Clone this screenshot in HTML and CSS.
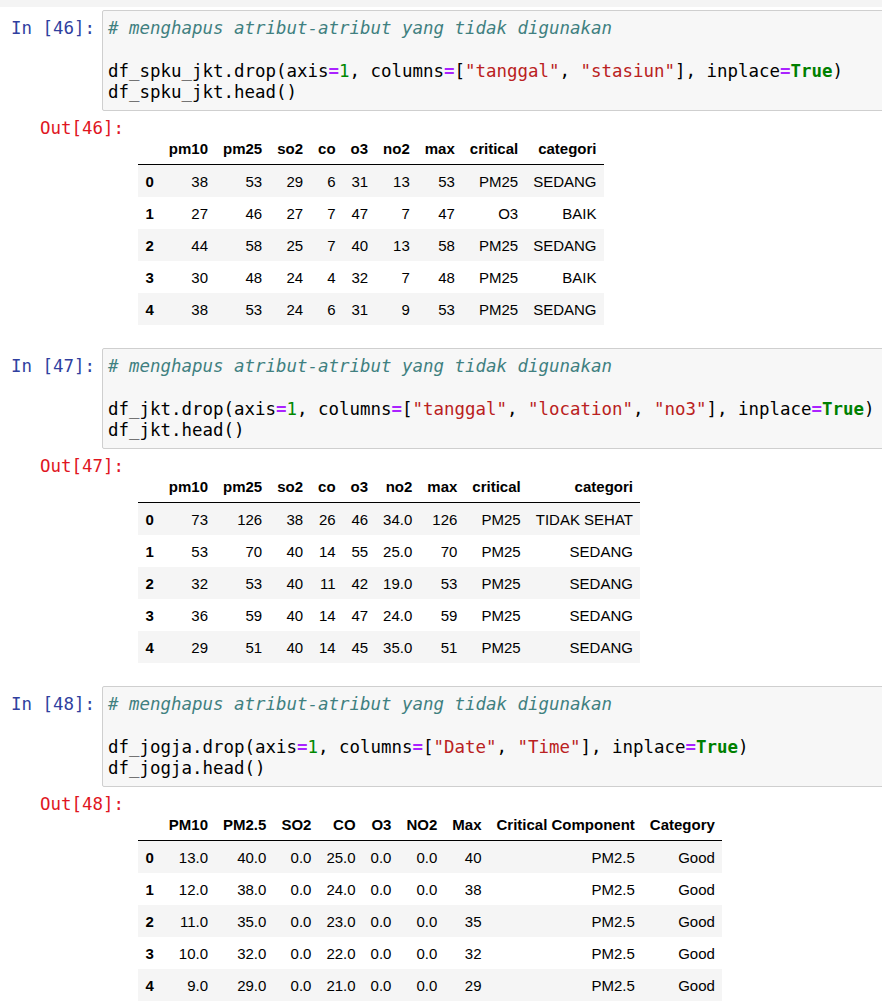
FILE: index.html
```html
<!DOCTYPE html>
<html>
<head>
<meta charset="utf-8">
<link rel="stylesheet" href="styles.css">
</head>
<body>
<div class="topstrip"></div>
<div class="notebook">

<div class="cell">
  <div class="input">
    <div class="prompt in-prompt">In [46]:</div>
    <div class="code"><pre><span class="c"># menghapus atribut-atribut yang tidak digunakan</span>

df_spku_jkt.drop(axis<span class="o">=</span><span class="n">1</span>, columns<span class="o">=</span>[<span class="s">"tanggal"</span>, <span class="s">"stasiun"</span>], inplace<span class="o">=</span><span class="k">True</span>)
df_spku_jkt.head()</pre></div>
  </div>
  <div class="output">
    <div class="prompt out-prompt">Out[46]:</div>
    <div class="out-sub">
      <table class="dataframe">
        <thead><tr><th></th><th>pm10</th><th>pm25</th><th>so2</th><th>co</th><th>o3</th><th>no2</th><th>max</th><th>critical</th><th>categori</th></tr></thead>
        <tbody>
          <tr><th>0</th><td>38</td><td>53</td><td>29</td><td>6</td><td>31</td><td>13</td><td>53</td><td>PM25</td><td>SEDANG</td></tr>
          <tr><th>1</th><td>27</td><td>46</td><td>27</td><td>7</td><td>47</td><td>7</td><td>47</td><td>O3</td><td>BAIK</td></tr>
          <tr><th>2</th><td>44</td><td>58</td><td>25</td><td>7</td><td>40</td><td>13</td><td>58</td><td>PM25</td><td>SEDANG</td></tr>
          <tr><th>3</th><td>30</td><td>48</td><td>24</td><td>4</td><td>32</td><td>7</td><td>48</td><td>PM25</td><td>BAIK</td></tr>
          <tr><th>4</th><td>38</td><td>53</td><td>24</td><td>6</td><td>31</td><td>9</td><td>53</td><td>PM25</td><td>SEDANG</td></tr>
        </tbody>
      </table>
    </div>
  </div>
</div>

<div class="cell">
  <div class="input">
    <div class="prompt in-prompt">In [47]:</div>
    <div class="code"><pre><span class="c"># menghapus atribut-atribut yang tidak digunakan</span>

df_jkt.drop(axis<span class="o">=</span><span class="n">1</span>, columns<span class="o">=</span>[<span class="s">"tanggal"</span>, <span class="s">"location"</span>, <span class="s">"no3"</span>], inplace<span class="o">=</span><span class="k">True</span>)
df_jkt.head()</pre></div>
  </div>
  <div class="output">
    <div class="prompt out-prompt">Out[47]:</div>
    <div class="out-sub">
      <table class="dataframe">
        <thead><tr><th></th><th>pm10</th><th>pm25</th><th>so2</th><th>co</th><th>o3</th><th>no2</th><th>max</th><th>critical</th><th>categori</th></tr></thead>
        <tbody>
          <tr><th>0</th><td>73</td><td>126</td><td>38</td><td>26</td><td>46</td><td>34.0</td><td>126</td><td>PM25</td><td>TIDAK SEHAT</td></tr>
          <tr><th>1</th><td>53</td><td>70</td><td>40</td><td>14</td><td>55</td><td>25.0</td><td>70</td><td>PM25</td><td>SEDANG</td></tr>
          <tr><th>2</th><td>32</td><td>53</td><td>40</td><td>11</td><td>42</td><td>19.0</td><td>53</td><td>PM25</td><td>SEDANG</td></tr>
          <tr><th>3</th><td>36</td><td>59</td><td>40</td><td>14</td><td>47</td><td>24.0</td><td>59</td><td>PM25</td><td>SEDANG</td></tr>
          <tr><th>4</th><td>29</td><td>51</td><td>40</td><td>14</td><td>45</td><td>35.0</td><td>51</td><td>PM25</td><td>SEDANG</td></tr>
        </tbody>
      </table>
    </div>
  </div>
</div>

<div class="cell">
  <div class="input">
    <div class="prompt in-prompt">In [48]:</div>
    <div class="code"><pre><span class="c"># menghapus atribut-atribut yang tidak digunakan</span>

df_jogja.drop(axis<span class="o">=</span><span class="n">1</span>, columns<span class="o">=</span>[<span class="s">"Date"</span>, <span class="s">"Time"</span>], inplace<span class="o">=</span><span class="k">True</span>)
df_jogja.head()</pre></div>
  </div>
  <div class="output">
    <div class="prompt out-prompt">Out[48]:</div>
    <div class="out-sub">
      <table class="dataframe">
        <thead><tr><th></th><th>PM10</th><th>PM2.5</th><th>SO2</th><th>CO</th><th>O3</th><th>NO2</th><th>Max</th><th>Critical Component</th><th>Category</th></tr></thead>
        <tbody>
          <tr><th>0</th><td>13.0</td><td>40.0</td><td>0.0</td><td>25.0</td><td>0.0</td><td>0.0</td><td>40</td><td>PM2.5</td><td>Good</td></tr>
          <tr><th>1</th><td>12.0</td><td>38.0</td><td>0.0</td><td>24.0</td><td>0.0</td><td>0.0</td><td>38</td><td>PM2.5</td><td>Good</td></tr>
          <tr><th>2</th><td>11.0</td><td>35.0</td><td>0.0</td><td>23.0</td><td>0.0</td><td>0.0</td><td>35</td><td>PM2.5</td><td>Good</td></tr>
          <tr><th>3</th><td>10.0</td><td>32.0</td><td>0.0</td><td>22.0</td><td>0.0</td><td>0.0</td><td>32</td><td>PM2.5</td><td>Good</td></tr>
          <tr><th>4</th><td>9.0</td><td>29.0</td><td>0.0</td><td>21.0</td><td>0.0</td><td>0.0</td><td>29</td><td>PM2.5</td><td>Good</td></tr>
        </tbody>
      </table>
    </div>
  </div>
</div>

</div>
</body>
</html>
```

FILE: styles.css
```css
html, body {
  margin: 0;
  padding: 0;
  background: #ffffff;
  overflow: hidden;
}

.topstrip {
  height: 7px;
  background: #f4f4f4;
  margin-bottom: 3px;
}

.notebook {
  display: flex;
  flex-direction: column;
  gap: 22px;
}

.cell {
  display: flex;
  flex-direction: column;
}

.input {
  display: flex;
  align-items: flex-start;
}

.prompt {
  font-family: "DejaVu Sans Mono", monospace;
  font-size: 17.45px;
  line-height: 21.25px;
  text-align: right;
  white-space: pre;
  box-sizing: border-box;
  flex: none;
}

.in-prompt {
  color: #303F9F;
  width: 102px;
  padding-right: 7px;
  padding-top: 8px;
}

.out-prompt {
  color: #e0161f;
  width: 131px;
  padding-right: 7px;
  padding-top: 7px;
}

.code {
  flex: 1;
  margin-right: -20px;
  background: #f7f7f7;
  border: 1px solid #cfcfcf;
  border-radius: 2px;
}

.code pre {
  margin: 0;
  padding: 7px 5px;
  font-family: "DejaVu Sans Mono", monospace;
  font-size: 17.45px;
  line-height: 21.25px;
  color: #000;
}

.c { color: #408080; font-style: italic; }
.o { color: #AA22FF; font-weight: bold; }
.n { color: #008800; }
.s { color: #BA2121; }
.k { color: #008000; font-weight: bold; }

.output {
  display: flex;
  align-items: flex-start;
}

.out-sub {
  padding-top: 21px;
  padding-left: 7px;
}

.dataframe {
  border-collapse: collapse;
  border-spacing: 0;
  border: none;
  font-family: "Liberation Sans", Arial, sans-serif;
  font-size: 15px;
  color: #000;
  margin-bottom: 1px;
}

.dataframe thead {
  border-bottom: 1px solid #000;
}

.dataframe th,
.dataframe td {
  padding: 7.5px;
  line-height: 17px;
  text-align: right;
  vertical-align: middle;
  white-space: nowrap;
  border: none;
}

.dataframe th {
  font-weight: bold;
}

.dataframe tbody tr:nth-child(odd) {
  background: #f5f5f5;
}
```
